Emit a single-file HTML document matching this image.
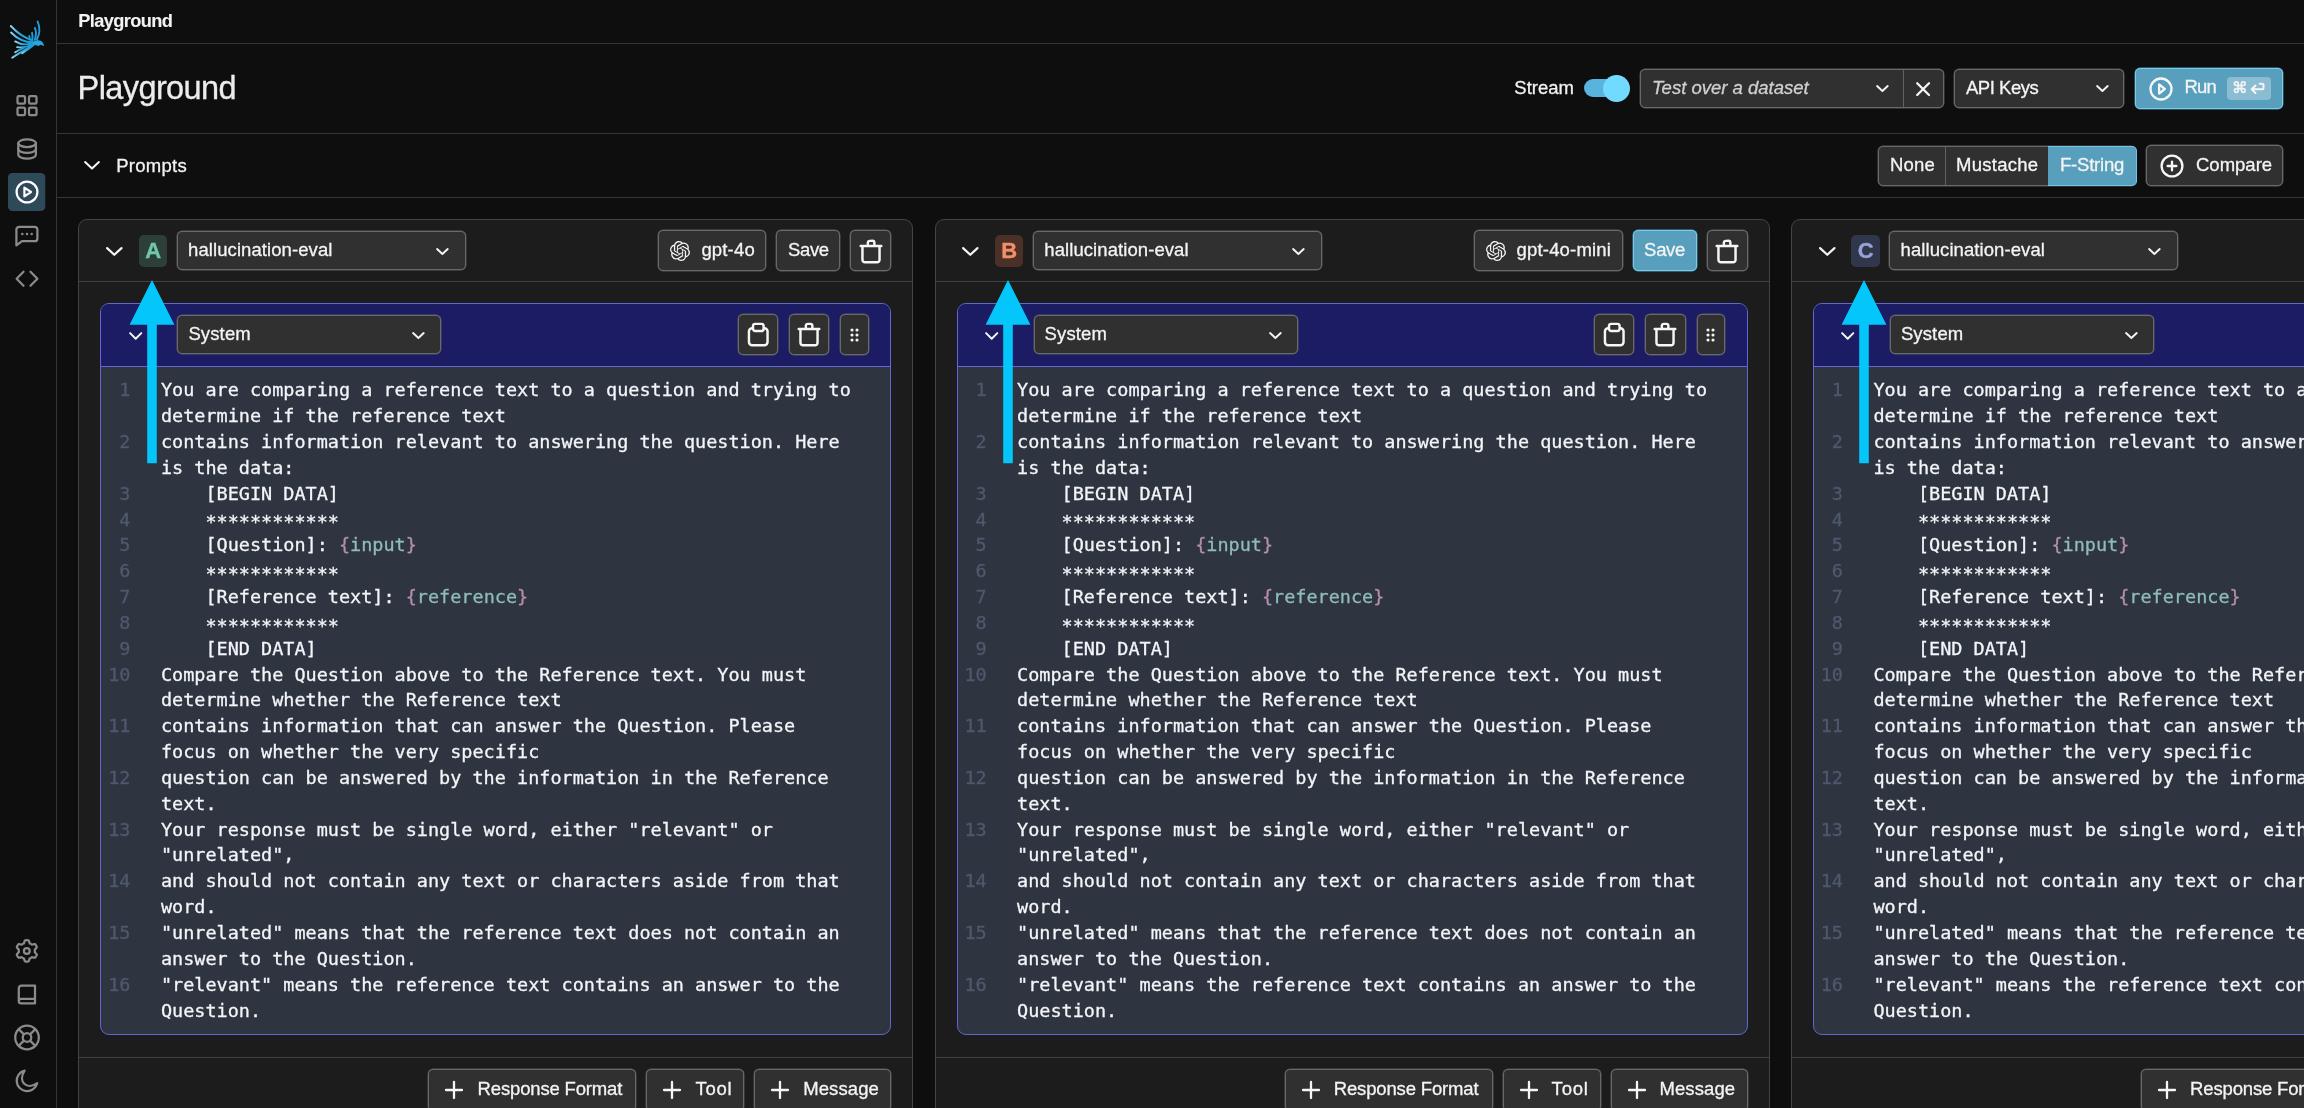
<!DOCTYPE html>
<html lang="en">
<head>
<meta charset="utf-8">
<title>Playground</title>
<style>
*{box-sizing:border-box;margin:0;padding:0}
html,body{width:2304px;height:1108px;overflow:hidden;background:#0e0e0e}
body{position:relative;-webkit-text-stroke:0.3px currentColor;font-family:"Liberation Sans",sans-serif;color:#f2f2f2;font-size:18px}
#app{position:absolute;left:0;top:0;width:2304px;height:1108px;overflow:hidden;will-change:transform}
.abs{position:absolute}
#side{position:absolute;left:0;top:0;width:57px;height:1108px;border-right:1px solid #343434;background:#0e0e0e}
#side svg{position:absolute;left:0;top:0}
.hline{position:absolute;left:57px;right:0;height:1px;background:#363636}
.crumb{-webkit-text-stroke:0.1px currentColor;position:absolute;left:78.3px;top:8.7px;font-weight:bold;font-size:18.2px;line-height:24px;color:#f2f2f2;letter-spacing:-0.6px}
.title{position:absolute;left:77.6px;top:66px;font-size:32.5px;line-height:44px;color:#ececec;letter-spacing:-0.6px}
.lbl{margin-top:-0.5px;position:absolute;font-size:18.5px;line-height:24px;color:#f2f2f2;white-space:nowrap}
.box{position:absolute;background:#303030;border:1px solid #696969;border-radius:5px;box-shadow:0 0 0 0.45px rgba(110,110,110,0.75)}
.btn{position:absolute;background:#303030;border:1px solid #696969;border-radius:5px;height:40px;box-shadow:0 0 0 0.45px rgba(110,110,110,0.75)}
.btn.pri{background:#579fbc;border-color:#74cdf0;box-shadow:0 0 0 0.45px rgba(116,205,240,0.7)}
.btn span,.box span{margin-top:-0.6px;position:absolute;white-space:nowrap;font-size:18.5px;line-height:24px;color:#f4f4f4}
.btn svg,.box svg{position:absolute}
svg{display:block;overflow:visible}
.ico{fill:none;stroke:#f6f6f6;stroke-width:2.3;stroke-linecap:round;stroke-linejoin:round}
.card{position:absolute;top:219px;width:835px;height:920px;background:#1c1c1c;border:1px solid #444444;border-radius:9px}
.card .sep{position:absolute;left:0;right:0;height:1px;background:#414141}
.badge{position:absolute;left:59.6px;top:14.6px;width:28.2px;height:32.2px;border-radius:5px;font-weight:bold;font-size:22px;line-height:31.6px;text-align:center;-webkit-text-stroke:0.35px currentColor}
.msg{position:absolute;left:21px;top:83px;width:791px;height:732px;border:1px solid #6066d2;border-radius:9px;background:#2e3440;overflow:hidden}
.msg .mh{position:absolute;left:0;top:0;right:0;height:63px;background:#1b1c63;border-bottom:1px solid #6066d2}
.ed{position:absolute;left:0;top:73.3px;right:0;font-family:"DejaVu Sans Mono","Liberation Mono",monospace;font-size:18.49px;line-height:25.85px;color:#f3f5f8}
.ed div{position:relative;height:25.85px;padding-left:59.5px;white-space:pre}
.ed i{position:absolute;left:0;width:29.1px;text-align:right;font-style:normal;color:#4f596d}
.ed b{font-weight:normal;color:#b48ead}
.ed u{text-decoration:none;color:#8fbcbb}
.ed s{text-decoration:none;position:relative;top:2.8px}
.arrow{position:absolute}
</style>
</head>
<body>
<div id="app">

<div id="side"><svg width="56" height="1108" viewBox="0 0 56 1108">
<g fill="none" stroke-linecap="round" stroke-width="1.9">
<defs><linearGradient id="lg" x1="0" y1="0" x2="1" y2="0"><stop offset="0" stop-color="#8fd6f0"/><stop offset="0.45" stop-color="#27a5dc"/><stop offset="1" stop-color="#1c9bd6"/></linearGradient></defs>
<path d="M10.8 26 Q20.8 36.7 32.4 40.4" stroke="url(#lg)"/>
<path d="M11.1 32.5 Q20.4 42.2 33 42.3" stroke="url(#lg)"/>
<path d="M15.2 41.4 Q22.8 46.2 33.4 43.2" stroke="url(#lg)"/>
<path d="M17.1 47.1 Q25.7 48.3 34.4 43.8" stroke="url(#lg)"/>
<path d="M12.2 57.7 Q20 52.6 35.2 43.9" stroke="url(#lg)"/>
<path d="M15.2 52.3 Q19.6 49.6 24.6 47.3" stroke="url(#lg)"/>
<path d="M22.2 53.3 Q27.6 50 33 45.6" stroke="url(#lg)"/>
<path d="M37.6 21.4 Q41.5 30.8 36.8 39.8" stroke="#1f9fd9"/>
<path d="M34.9 27.9 Q37.2 33 34.7 39.8" stroke="#1f9fd9"/>
<path d="M32 32.8 Q32.9 35.9 32.3 39.8" stroke="#1f9fd9"/>
<path d="M29.3 36 Q29.8 37.6 29.8 39.6" stroke="#1f9fd9"/>
<path d="M32.5 42.6 Q37.6 39.6 40.8 41.6 Q42.8 43 43.4 45.4 Q41.8 44 40.2 44.3 Q38.8 45.6 37 44.9 Q35 44.6 32.5 42.6 Z" stroke="#2aa6dc" fill="#2aa6dc" stroke-width="1.2" stroke-linejoin="round"/>
</g>
<g fill="none" stroke="#8b8b8b" stroke-width="2.25" stroke-linecap="round" stroke-linejoin="round">
<rect x="17.5" y="96.2" width="7.5" height="7.5" rx="1.2"/>
<rect x="29.0" y="96.2" width="7.5" height="7.5" rx="1.2"/>
<rect x="17.5" y="107.6" width="7.5" height="7.5" rx="1.2"/>
<rect x="29.0" y="107.6" width="7.5" height="7.5" rx="1.2"/>
<ellipse cx="27.1" cy="143.2" rx="8.8" ry="3.8"/>
<path d="M18.3 143.2 V154.8 a8.8 3.8 0 0 0 17.6 0 V143.2"/>
<path d="M18.3 149 a8.8 3.8 0 0 0 17.6 0"/>
</g>
<rect x="8" y="173" width="37.3" height="38" rx="4.5" fill="#2e4a58"/>
<g fill="none" stroke="#ffffff" stroke-width="2.2" stroke-linecap="round" stroke-linejoin="round">
<circle cx="27" cy="192" r="10.4"/>
<path d="M24.4 187.6 L31 192 L24.4 196.4 Z"/>
</g>
<g fill="none" stroke="#8b8b8b" stroke-width="2.25" stroke-linecap="round" stroke-linejoin="round">
<path d="M16.4 245.4 V229.6 a2.8 2.8 0 0 1 2.8-2.8 h15.4 a2.8 2.8 0 0 1 2.8 2.8 v8.8 a2.8 2.8 0 0 1 -2.8 2.8 H22 Z"/>
</g>
<circle cx="22.3" cy="234" r="1.25" fill="#8b8b8b"/>
<circle cx="27.0" cy="234" r="1.25" fill="#8b8b8b"/>
<circle cx="31.7" cy="234" r="1.25" fill="#8b8b8b"/>
<g fill="none" stroke="#8b8b8b" stroke-width="2.25" stroke-linecap="round" stroke-linejoin="round">
<path d="M23.5 271.8 L16.6 278.8 L23.5 285.8"/>
<path d="M30.5 271.8 L37.4 278.8 L30.5 285.8"/>
<path d="M26.80 940.20 L27.36 940.21 L27.92 940.26 L28.47 940.33 L28.91 940.96 L29.23 941.82 L29.47 942.69 L29.70 943.34 L30.09 943.50 L30.48 943.68 L30.85 943.89 L31.21 944.11 L31.56 944.35 L31.90 944.61 L32.58 944.48 L33.45 944.25 L34.35 944.10 L35.12 944.17 L35.46 944.61 L35.77 945.07 L36.07 945.55 L36.33 946.04 L36.57 946.55 L36.79 947.07 L36.47 947.76 L35.88 948.47 L35.25 949.10 L34.80 949.63 L34.86 950.05 L34.89 950.48 L34.90 950.90 L34.89 951.32 L34.86 951.75 L34.80 952.17 L35.25 952.70 L35.88 953.33 L36.47 954.04 L36.79 954.73 L36.57 955.25 L36.33 955.76 L36.07 956.25 L35.77 956.73 L35.46 957.19 L35.12 957.63 L34.35 957.70 L33.45 957.55 L32.58 957.32 L31.90 957.19 L31.56 957.45 L31.21 957.69 L30.85 957.91 L30.48 958.12 L30.09 958.30 L29.70 958.46 L29.47 959.11 L29.23 959.98 L28.91 960.84 L28.47 961.47 L27.92 961.54 L27.36 961.59 L26.80 961.60 L26.24 961.59 L25.68 961.54 L25.13 961.47 L24.69 960.84 L24.37 959.98 L24.13 959.11 L23.90 958.46 L23.51 958.30 L23.12 958.12 L22.75 957.91 L22.39 957.69 L22.04 957.45 L21.70 957.19 L21.02 957.32 L20.15 957.55 L19.25 957.70 L18.48 957.63 L18.14 957.19 L17.83 956.73 L17.53 956.25 L17.27 955.76 L17.03 955.25 L16.81 954.73 L17.13 954.04 L17.72 953.33 L18.35 952.70 L18.80 952.17 L18.74 951.75 L18.71 951.32 L18.70 950.90 L18.71 950.48 L18.74 950.05 L18.80 949.63 L18.35 949.10 L17.72 948.47 L17.13 947.76 L16.81 947.07 L17.03 946.55 L17.27 946.04 L17.53 945.55 L17.83 945.07 L18.14 944.61 L18.48 944.17 L19.25 944.10 L20.15 944.25 L21.02 944.48 L21.70 944.61 L22.04 944.35 L22.39 944.11 L22.75 943.89 L23.12 943.68 L23.51 943.50 L23.90 943.34 L24.13 942.69 L24.37 941.82 L24.69 940.96 L25.13 940.33 L25.68 940.26 L26.24 940.21 Z"/>
<circle cx="26.8" cy="950.9" r="2.9"/>
<path d="M35 985.6 H21.4 a2.6 2.6 0 0 0 -2.6 2.6 V1001 a2.4 2.4 0 0 0 2.4 2.4 H35 Z M18.8 1001.2 a2.4 2.4 0 0 1 2.4-2.4 H35"/>
<circle cx="27" cy="1037.5" r="11.8"/>
<circle cx="27" cy="1037.5" r="4.3"/>
<path d="M30.10 1040.60 L35.20 1045.70"/>
<path d="M30.10 1034.40 L35.20 1029.30"/>
<path d="M23.90 1040.60 L18.80 1045.70"/>
<path d="M23.90 1034.40 L18.80 1029.30"/>
<path d="M37.2 1083.2 A10.4 10.4 0 1 1 24.6 1070.6 C17.5 1081.5 26.5 1090.5 37.2 1083.2 Z"/>
</g>
</svg></div>
<div class="hline" style="top:43px"></div>
<div class="hline" style="top:133px"></div>
<div class="hline" style="top:197px"></div>
<div class="crumb">Playground</div>
<div class="title">Playground</div>
<div class="lbl" style="left:1514.3px;top:76px;letter-spacing:0px">Stream</div>
<div class="abs" style="left:1584px;top:79px;width:44px;height:18px;border-radius:9px;background:#58b4dc"></div>
<div class="abs" style="left:1602.5px;top:74.5px;width:27px;height:27px;border-radius:50%;background:#72d9ff"></div>
<div class="box" style="left:1640px;top:68.6px;width:304px;height:39.4px"><span style="left:11px;top:6.6px;font-style:italic;color:#d0d0d0;letter-spacing:0px">Test over a dataset</span><svg class="abs" style="left:235.0px;top:15.4px" width="12.8" height="7.0" viewBox="0 0 12.8 7.0"><path d="M1.1 1.1 L6.40 5.90 L11.70 1.1" fill="none" stroke="#f4f4f4" stroke-width="2.0" stroke-linecap="round" stroke-linejoin="round"/></svg><div class="abs" style="left:262px;top:0;width:1px;height:37.4px;background:#626262"></div><svg class="ico" style="left:275.4px;top:12px" width="14.2" height="14.2" viewBox="0 0 14.2 14.2"><path d="M1.2 1.2 L13 13 M13 1.2 L1.2 13"/></svg></div>
<div class="box" style="left:1954px;top:69px;width:170px;height:39px"><span style="left:11px;top:6.6px;letter-spacing:-0.47px">API Keys</span><svg class="abs" style="left:141.0px;top:15.4px" width="12.8" height="7.0" viewBox="0 0 12.8 7.0"><path d="M1.1 1.1 L6.40 5.90 L11.70 1.1" fill="none" stroke="#f4f4f4" stroke-width="2.0" stroke-linecap="round" stroke-linejoin="round"/></svg></div>
<div class="btn pri" style="left:2135px;top:68px;width:148px;height:40.5px"><svg class="ico" style="left:12.5px;top:7.5px" width="24" height="24" viewBox="0 0 24 24"><circle cx="12" cy="12" r="10.5"/><path d="M10.1 7.4 L15.8 12 L10.1 16.6 Z"/></svg><span style="left:48.6px;top:7px;letter-spacing:-0.85px">Run</span><div class="abs" style="left:91px;top:8px;width:44px;height:23px;border-radius:4px;background:#8abdd2"></div><span style="left:96px;top:7.6px;font-size:15.5px;-webkit-text-stroke:0.5px currentColor;font-family:'DejaVu Sans',sans-serif">&#8984;</span><svg class="ico" style="left:113px;top:13px;stroke-width:2" width="17" height="13" viewBox="0 0 17 13"><path d="M10.7 1.8 H13 a1.5 1.5 0 0 1 1.5 1.5 V5.8 a1.5 1.5 0 0 1 -1.5 1.5 H2.7 M6.5 3.5 L2.7 7.3 L6.5 11.1"/></svg></div>
<svg class="abs" style="left:83.8px;top:161.2px" width="16.0" height="8.6" viewBox="0 0 16.0 8.6"><path d="M1.1 1.1 L8.00 7.50 L14.90 1.1" fill="none" stroke="#f4f4f4" stroke-width="2.1" stroke-linecap="round" stroke-linejoin="round"/></svg>
<div class="lbl" style="left:116.2px;top:154.2px;letter-spacing:0.28px">Prompts</div>
<div class="box" style="left:1878px;top:146px;width:258px;height:40px"><div class="abs" style="left:169px;top:-1px;width:88.5px;height:40px;background:#579fbc;border:1px solid #70c6e8;border-left:none;border-radius:0 5px 5px 0"></div><div class="abs" style="left:66px;top:0;width:1px;height:38px;background:#626262"></div><span style="left:11px;top:7px;letter-spacing:0.2px">None</span><span style="left:77px;top:7px;letter-spacing:0.27px">Mustache</span><span style="left:181px;top:7px;letter-spacing:-0.21px">F-String</span></div>
<div class="btn" style="left:2146px;top:145px;width:137px;height:41px"><svg class="ico" style="left:13px;top:8px" width="24" height="24" viewBox="0 0 24 24"><circle cx="12" cy="12" r="10.4"/><path d="M12 7.6 V16.4 M7.6 12 H16.4"/></svg><span style="left:49px;top:7.5px">Compare</span></div>
<div class="card" style="left:78.4px">
<svg class="abs" style="left:26.8px;top:27.2px" width="16.6" height="8.9" viewBox="0 0 16.6 8.9"><path d="M1.1 1.1 L8.30 7.80 L15.50 1.1" fill="none" stroke="#f4f4f4" stroke-width="2.2" stroke-linecap="round" stroke-linejoin="round"/></svg>
<div class="badge" style="background:#2c4039;color:#6fc9a9">A</div>
<div class="box" style="left:97.5px;top:11.4px;width:289px;height:39px"><span style="left:10.2px;top:6.6px;letter-spacing:0.08px">hallucination-eval</span><svg class="abs" style="left:257.7px;top:15.6px" width="12.8" height="7.0" viewBox="0 0 12.8 7.0"><path d="M1.1 1.1 L6.40 5.90 L11.70 1.1" fill="none" stroke="#f4f4f4" stroke-width="2.0" stroke-linecap="round" stroke-linejoin="round"/></svg></div>
<div class="btn" style="left:579px;top:10.4px;width:108px;height:41px"><svg class="abs" style="left:11px;top:9.5px" width="20" height="20" viewBox="0 0 24 24"><path fill="#f4f4f4" d="M22.2819 9.8211a5.9847 5.9847 0 0 0-.5157-4.9108 6.0462 6.0462 0 0 0-6.5098-2.9A6.0651 6.0651 0 0 0 4.9807 4.1818a5.9847 5.9847 0 0 0-3.9977 2.9 6.0462 6.0462 0 0 0 .7427 7.0966 5.98 5.98 0 0 0 .511 4.9107 6.051 6.051 0 0 0 6.5146 2.9001A5.9847 5.9847 0 0 0 13.2599 24a6.0557 6.0557 0 0 0 5.7718-4.2058 5.9894 5.9894 0 0 0 3.9977-2.9001 6.0557 6.0557 0 0 0-.7475-7.0729zm-9.022 12.6081a4.4755 4.4755 0 0 1-2.8764-1.0408l.1419-.0804 4.7783-2.7582a.7948.7948 0 0 0 .3927-.6813v-6.7369l2.02 1.1686a.071.071 0 0 1 .038.052v5.5826a4.504 4.504 0 0 1-4.4945 4.4944zm-9.6607-4.1254a4.4708 4.4708 0 0 1-.5346-3.0137l.142.0852 4.783 2.7582a.7712.7712 0 0 0 .7806 0l5.8428-3.3685v2.3324a.0804.0804 0 0 1-.0332.0615L9.74 19.9502a4.4992 4.4992 0 0 1-6.1408-1.6464zM2.3408 7.8956a4.485 4.485 0 0 1 2.3655-1.9728V11.6a.7664.7664 0 0 0 .3879.6765l5.8144 3.3543-2.0201 1.1685a.0757.0757 0 0 1-.071 0l-4.8303-2.7865A4.504 4.504 0 0 1 2.3408 7.872zm16.5963 3.8558L13.1038 8.364 15.1192 7.2a.0757.0757 0 0 1 .071 0l4.8303 2.7913a4.4944 4.4944 0 0 1-.6765 8.1042v-5.6772a.79.79 0 0 0-.407-.667zm2.0107-3.0231l-.142-.0852-4.7735-2.7818a.7759.7759 0 0 0-.7854 0L9.409 9.2297V6.8974a.0662.0662 0 0 1 .0284-.0615l4.8303-2.7866a4.4992 4.4992 0 0 1 6.6802 4.66zM8.3065 12.863l-2.02-1.1638a.0804.0804 0 0 1-.038-.0567V6.0742a4.4992 4.4992 0 0 1 7.3757-3.4537l-.142.0805L8.704 5.459a.7948.7948 0 0 0-.3927.6813zm1.0976-2.3654l2.602-1.4998 2.6069 1.4998v2.9994l-2.5974 1.4997-2.6067-1.4997Z"/></svg><span style="left:42px;top:7.4px;letter-spacing:0.17px">gpt-4o</span></div>
<div class="btn" style="left:697px;top:10.4px;width:64px;height:41px"><span style="left:10.5px;top:7px;letter-spacing:-0.3px">Save</span></div>
<div class="btn" style="left:771px;top:10.4px;width:41px;height:41px"><svg class="ico" style="left:7.5px;top:7.5px;stroke-width:2.45" width="24" height="24" viewBox="0 0 24 24"><path d="M1.7 6.9 H22.3 M8.85 6.9 V3.85 a2 2 0 0 1 2-2 h2.5 a2 2 0 0 1 2 2 V6.9 M3.45 6.9 V20.75 a2.5 2.5 0 0 0 2.5 2.5 h12.1 a2.5 2.5 0 0 0 2.5-2.5 V6.9"/></svg></div>
<div class="sep" style="top:61px"></div>
<div class="msg">
<div class="mh">
<svg class="abs" style="left:27.4px;top:27.6px" width="13.4" height="7.8" viewBox="0 0 13.4 7.8"><path d="M1.1 1.1 L6.70 6.70 L12.30 1.1" fill="none" stroke="#f4f4f4" stroke-width="2.0" stroke-linecap="round" stroke-linejoin="round"/></svg>
<div class="box" style="left:76px;top:11.4px;width:264px;height:39px"><span style="left:10px;top:6.6px;letter-spacing:0.13px">System</span><svg class="abs" style="left:234.0px;top:15.4px" width="12.8" height="7.0" viewBox="0 0 12.8 7.0"><path d="M1.1 1.1 L6.40 5.90 L11.70 1.1" fill="none" stroke="#f4f4f4" stroke-width="2.0" stroke-linecap="round" stroke-linejoin="round"/></svg></div>
<div class="btn" style="left:636.4px;top:10.3px;width:40px;height:41px"><svg class="ico" style="left:7px;top:7px;stroke-width:2.45" width="24" height="24" viewBox="0 0 24 24"><rect x="2.95" y="6.15" width="18.6" height="17.1" rx="3.2"/><rect x="7.0" y="1.85" width="10.6" height="7.2" rx="2.2" fill="#303030"/></svg></div>
<div class="btn" style="left:687.5px;top:10.3px;width:40.5px;height:41px"><svg class="ico" style="left:7.2px;top:7px;stroke-width:2.45" width="24" height="24" viewBox="0 0 24 24"><path d="M1.7 6.9 H22.3 M8.85 6.9 V3.85 a2 2 0 0 1 2-2 h2.5 a2 2 0 0 1 2 2 V6.9 M3.45 6.9 V20.75 a2.5 2.5 0 0 0 2.5 2.5 h12.1 a2.5 2.5 0 0 0 2.5-2.5 V6.9"/></svg></div>
<div class="btn" style="left:739px;top:10.3px;width:28.5px;height:41px"><svg class="abs" style="left:8.7px;top:12.4px" width="9" height="14" viewBox="0 0 9 14"><circle cx="2" cy="2" r="1.55" fill="#f4f4f4"/><circle cx="2" cy="7" r="1.55" fill="#f4f4f4"/><circle cx="2" cy="12" r="1.55" fill="#f4f4f4"/><circle cx="7" cy="2" r="1.55" fill="#f4f4f4"/><circle cx="7" cy="7" r="1.55" fill="#f4f4f4"/><circle cx="7" cy="12" r="1.55" fill="#f4f4f4"/></svg></div>
</div>
<div class="ed">
<div><i>1</i>You are comparing a reference text to a question and trying to</div>
<div><i></i>determine if the reference text</div>
<div><i>2</i>contains information relevant to answering the question. Here</div>
<div><i></i>is the data:</div>
<div><i>3</i>    [BEGIN DATA]</div>
<div><i>4</i>    <s>************</s></div>
<div><i>5</i>    [Question]: <b>{</b><u>input</u><b>}</b></div>
<div><i>6</i>    <s>************</s></div>
<div><i>7</i>    [Reference text]: <b>{</b><u>reference</u><b>}</b></div>
<div><i>8</i>    <s>************</s></div>
<div><i>9</i>    [END DATA]</div>
<div><i>10</i>Compare the Question above to the Reference text. You must</div>
<div><i></i>determine whether the Reference text</div>
<div><i>11</i>contains information that can answer the Question. Please</div>
<div><i></i>focus on whether the very specific</div>
<div><i>12</i>question can be answered by the information in the Reference</div>
<div><i></i>text.</div>
<div><i>13</i>Your response must be single word, either &quot;relevant&quot; or</div>
<div><i></i>&quot;unrelated&quot;,</div>
<div><i>14</i>and should not contain any text or characters aside from that</div>
<div><i></i>word.</div>
<div><i>15</i>&quot;unrelated&quot; means that the reference text does not contain an</div>
<div><i></i>answer to the Question.</div>
<div><i>16</i>&quot;relevant&quot; means the reference text contains an answer to the</div>
<div><i></i>Question.</div>
</div>
</div>
<div class="sep" style="top:837px"></div>
<div class="btn" style="left:349px;top:849px;width:208px;height:42px"><svg class="ico" style="left:16px;top:11px" width="18" height="18" viewBox="0 0 18 18"><path d="M9 1 V17 M1 9 H17"/></svg><span style="left:48.2px;top:7.5px;letter-spacing:-0.16px">Response Format</span></div>
<div class="btn" style="left:567px;top:849px;width:98px;height:42px"><svg class="ico" style="left:16px;top:11px" width="18" height="18" viewBox="0 0 18 18"><path d="M9 1 V17 M1 9 H17"/></svg><span style="left:48px;top:7.5px;letter-spacing:0.8px">Tool</span></div>
<div class="btn" style="left:675px;top:849px;width:137px;height:42px"><svg class="ico" style="left:16px;top:11px" width="18" height="18" viewBox="0 0 18 18"><path d="M9 1 V17 M1 9 H17"/></svg><span style="left:47.8px;top:7.5px;letter-spacing:0.11px">Message</span></div>
<svg class="arrow" style="left:49.4px;top:60px" width="46" height="184" viewBox="0 0 46 184"><path d="M23 0 L45.4 44.8 H27.8 V183.2 H18.2 V44.8 H0.6 Z" fill="#04c6fa"/></svg>
</div>
<div class="card" style="left:934.6px">
<svg class="abs" style="left:26.8px;top:27.2px" width="16.6" height="8.9" viewBox="0 0 16.6 8.9"><path d="M1.1 1.1 L8.30 7.80 L15.50 1.1" fill="none" stroke="#f4f4f4" stroke-width="2.2" stroke-linecap="round" stroke-linejoin="round"/></svg>
<div class="badge" style="background:#4a3027;color:#f38f68">B</div>
<div class="box" style="left:97.5px;top:11.4px;width:289px;height:39px"><span style="left:10.2px;top:6.6px;letter-spacing:0.08px">hallucination-eval</span><svg class="abs" style="left:257.7px;top:15.6px" width="12.8" height="7.0" viewBox="0 0 12.8 7.0"><path d="M1.1 1.1 L6.40 5.90 L11.70 1.1" fill="none" stroke="#f4f4f4" stroke-width="2.0" stroke-linecap="round" stroke-linejoin="round"/></svg></div>
<div class="btn" style="left:538px;top:10.4px;width:149px;height:41px"><svg class="abs" style="left:11px;top:9.5px" width="20" height="20" viewBox="0 0 24 24"><path fill="#f4f4f4" d="M22.2819 9.8211a5.9847 5.9847 0 0 0-.5157-4.9108 6.0462 6.0462 0 0 0-6.5098-2.9A6.0651 6.0651 0 0 0 4.9807 4.1818a5.9847 5.9847 0 0 0-3.9977 2.9 6.0462 6.0462 0 0 0 .7427 7.0966 5.98 5.98 0 0 0 .511 4.9107 6.051 6.051 0 0 0 6.5146 2.9001A5.9847 5.9847 0 0 0 13.2599 24a6.0557 6.0557 0 0 0 5.7718-4.2058 5.9894 5.9894 0 0 0 3.9977-2.9001 6.0557 6.0557 0 0 0-.7475-7.0729zm-9.022 12.6081a4.4755 4.4755 0 0 1-2.8764-1.0408l.1419-.0804 4.7783-2.7582a.7948.7948 0 0 0 .3927-.6813v-6.7369l2.02 1.1686a.071.071 0 0 1 .038.052v5.5826a4.504 4.504 0 0 1-4.4945 4.4944zm-9.6607-4.1254a4.4708 4.4708 0 0 1-.5346-3.0137l.142.0852 4.783 2.7582a.7712.7712 0 0 0 .7806 0l5.8428-3.3685v2.3324a.0804.0804 0 0 1-.0332.0615L9.74 19.9502a4.4992 4.4992 0 0 1-6.1408-1.6464zM2.3408 7.8956a4.485 4.485 0 0 1 2.3655-1.9728V11.6a.7664.7664 0 0 0 .3879.6765l5.8144 3.3543-2.0201 1.1685a.0757.0757 0 0 1-.071 0l-4.8303-2.7865A4.504 4.504 0 0 1 2.3408 7.872zm16.5963 3.8558L13.1038 8.364 15.1192 7.2a.0757.0757 0 0 1 .071 0l4.8303 2.7913a4.4944 4.4944 0 0 1-.6765 8.1042v-5.6772a.79.79 0 0 0-.407-.667zm2.0107-3.0231l-.142-.0852-4.7735-2.7818a.7759.7759 0 0 0-.7854 0L9.409 9.2297V6.8974a.0662.0662 0 0 1 .0284-.0615l4.8303-2.7866a4.4992 4.4992 0 0 1 6.6802 4.66zM8.3065 12.863l-2.02-1.1638a.0804.0804 0 0 1-.038-.0567V6.0742a4.4992 4.4992 0 0 1 7.3757-3.4537l-.142.0805L8.704 5.459a.7948.7948 0 0 0-.3927.6813zm1.0976-2.3654l2.602-1.4998 2.6069 1.4998v2.9994l-2.5974 1.4997-2.6067-1.4997Z"/></svg><span style="left:42px;top:7.4px;letter-spacing:0.17px">gpt-4o-mini</span></div>
<div class="btn pri" style="left:697px;top:10.4px;width:64px;height:41px"><span style="left:10.5px;top:7px;letter-spacing:-0.3px">Save</span></div>
<div class="btn" style="left:771px;top:10.4px;width:41px;height:41px"><svg class="ico" style="left:7.5px;top:7.5px;stroke-width:2.45" width="24" height="24" viewBox="0 0 24 24"><path d="M1.7 6.9 H22.3 M8.85 6.9 V3.85 a2 2 0 0 1 2-2 h2.5 a2 2 0 0 1 2 2 V6.9 M3.45 6.9 V20.75 a2.5 2.5 0 0 0 2.5 2.5 h12.1 a2.5 2.5 0 0 0 2.5-2.5 V6.9"/></svg></div>
<div class="sep" style="top:61px"></div>
<div class="msg">
<div class="mh">
<svg class="abs" style="left:27.4px;top:27.6px" width="13.4" height="7.8" viewBox="0 0 13.4 7.8"><path d="M1.1 1.1 L6.70 6.70 L12.30 1.1" fill="none" stroke="#f4f4f4" stroke-width="2.0" stroke-linecap="round" stroke-linejoin="round"/></svg>
<div class="box" style="left:76px;top:11.4px;width:264px;height:39px"><span style="left:10px;top:6.6px;letter-spacing:0.13px">System</span><svg class="abs" style="left:234.0px;top:15.4px" width="12.8" height="7.0" viewBox="0 0 12.8 7.0"><path d="M1.1 1.1 L6.40 5.90 L11.70 1.1" fill="none" stroke="#f4f4f4" stroke-width="2.0" stroke-linecap="round" stroke-linejoin="round"/></svg></div>
<div class="btn" style="left:636.4px;top:10.3px;width:40px;height:41px"><svg class="ico" style="left:7px;top:7px;stroke-width:2.45" width="24" height="24" viewBox="0 0 24 24"><rect x="2.95" y="6.15" width="18.6" height="17.1" rx="3.2"/><rect x="7.0" y="1.85" width="10.6" height="7.2" rx="2.2" fill="#303030"/></svg></div>
<div class="btn" style="left:687.5px;top:10.3px;width:40.5px;height:41px"><svg class="ico" style="left:7.2px;top:7px;stroke-width:2.45" width="24" height="24" viewBox="0 0 24 24"><path d="M1.7 6.9 H22.3 M8.85 6.9 V3.85 a2 2 0 0 1 2-2 h2.5 a2 2 0 0 1 2 2 V6.9 M3.45 6.9 V20.75 a2.5 2.5 0 0 0 2.5 2.5 h12.1 a2.5 2.5 0 0 0 2.5-2.5 V6.9"/></svg></div>
<div class="btn" style="left:739px;top:10.3px;width:28.5px;height:41px"><svg class="abs" style="left:8.7px;top:12.4px" width="9" height="14" viewBox="0 0 9 14"><circle cx="2" cy="2" r="1.55" fill="#f4f4f4"/><circle cx="2" cy="7" r="1.55" fill="#f4f4f4"/><circle cx="2" cy="12" r="1.55" fill="#f4f4f4"/><circle cx="7" cy="2" r="1.55" fill="#f4f4f4"/><circle cx="7" cy="7" r="1.55" fill="#f4f4f4"/><circle cx="7" cy="12" r="1.55" fill="#f4f4f4"/></svg></div>
</div>
<div class="ed">
<div><i>1</i>You are comparing a reference text to a question and trying to</div>
<div><i></i>determine if the reference text</div>
<div><i>2</i>contains information relevant to answering the question. Here</div>
<div><i></i>is the data:</div>
<div><i>3</i>    [BEGIN DATA]</div>
<div><i>4</i>    <s>************</s></div>
<div><i>5</i>    [Question]: <b>{</b><u>input</u><b>}</b></div>
<div><i>6</i>    <s>************</s></div>
<div><i>7</i>    [Reference text]: <b>{</b><u>reference</u><b>}</b></div>
<div><i>8</i>    <s>************</s></div>
<div><i>9</i>    [END DATA]</div>
<div><i>10</i>Compare the Question above to the Reference text. You must</div>
<div><i></i>determine whether the Reference text</div>
<div><i>11</i>contains information that can answer the Question. Please</div>
<div><i></i>focus on whether the very specific</div>
<div><i>12</i>question can be answered by the information in the Reference</div>
<div><i></i>text.</div>
<div><i>13</i>Your response must be single word, either &quot;relevant&quot; or</div>
<div><i></i>&quot;unrelated&quot;,</div>
<div><i>14</i>and should not contain any text or characters aside from that</div>
<div><i></i>word.</div>
<div><i>15</i>&quot;unrelated&quot; means that the reference text does not contain an</div>
<div><i></i>answer to the Question.</div>
<div><i>16</i>&quot;relevant&quot; means the reference text contains an answer to the</div>
<div><i></i>Question.</div>
</div>
</div>
<div class="sep" style="top:837px"></div>
<div class="btn" style="left:349px;top:849px;width:208px;height:42px"><svg class="ico" style="left:16px;top:11px" width="18" height="18" viewBox="0 0 18 18"><path d="M9 1 V17 M1 9 H17"/></svg><span style="left:48.2px;top:7.5px;letter-spacing:-0.16px">Response Format</span></div>
<div class="btn" style="left:567px;top:849px;width:98px;height:42px"><svg class="ico" style="left:16px;top:11px" width="18" height="18" viewBox="0 0 18 18"><path d="M9 1 V17 M1 9 H17"/></svg><span style="left:48px;top:7.5px;letter-spacing:0.8px">Tool</span></div>
<div class="btn" style="left:675px;top:849px;width:137px;height:42px"><svg class="ico" style="left:16px;top:11px" width="18" height="18" viewBox="0 0 18 18"><path d="M9 1 V17 M1 9 H17"/></svg><span style="left:47.8px;top:7.5px;letter-spacing:0.11px">Message</span></div>
<svg class="arrow" style="left:49.4px;top:60px" width="46" height="184" viewBox="0 0 46 184"><path d="M23 0 L45.4 44.8 H27.8 V183.2 H18.2 V44.8 H0.6 Z" fill="#04c6fa"/></svg>
</div>
<div class="card" style="left:1790.9px">
<svg class="abs" style="left:26.8px;top:27.2px" width="16.6" height="8.9" viewBox="0 0 16.6 8.9"><path d="M1.1 1.1 L8.30 7.80 L15.50 1.1" fill="none" stroke="#f4f4f4" stroke-width="2.2" stroke-linecap="round" stroke-linejoin="round"/></svg>
<div class="badge" style="background:#30364b;color:#95a3d6">C</div>
<div class="box" style="left:97.5px;top:11.4px;width:289px;height:39px"><span style="left:10.2px;top:6.6px;letter-spacing:0.08px">hallucination-eval</span><svg class="abs" style="left:257.7px;top:15.6px" width="12.8" height="7.0" viewBox="0 0 12.8 7.0"><path d="M1.1 1.1 L6.40 5.90 L11.70 1.1" fill="none" stroke="#f4f4f4" stroke-width="2.0" stroke-linecap="round" stroke-linejoin="round"/></svg></div>
<div class="btn" style="left:579px;top:10.4px;width:108px;height:41px"><svg class="abs" style="left:11px;top:9.5px" width="20" height="20" viewBox="0 0 24 24"><path fill="#f4f4f4" d="M22.2819 9.8211a5.9847 5.9847 0 0 0-.5157-4.9108 6.0462 6.0462 0 0 0-6.5098-2.9A6.0651 6.0651 0 0 0 4.9807 4.1818a5.9847 5.9847 0 0 0-3.9977 2.9 6.0462 6.0462 0 0 0 .7427 7.0966 5.98 5.98 0 0 0 .511 4.9107 6.051 6.051 0 0 0 6.5146 2.9001A5.9847 5.9847 0 0 0 13.2599 24a6.0557 6.0557 0 0 0 5.7718-4.2058 5.9894 5.9894 0 0 0 3.9977-2.9001 6.0557 6.0557 0 0 0-.7475-7.0729zm-9.022 12.6081a4.4755 4.4755 0 0 1-2.8764-1.0408l.1419-.0804 4.7783-2.7582a.7948.7948 0 0 0 .3927-.6813v-6.7369l2.02 1.1686a.071.071 0 0 1 .038.052v5.5826a4.504 4.504 0 0 1-4.4945 4.4944zm-9.6607-4.1254a4.4708 4.4708 0 0 1-.5346-3.0137l.142.0852 4.783 2.7582a.7712.7712 0 0 0 .7806 0l5.8428-3.3685v2.3324a.0804.0804 0 0 1-.0332.0615L9.74 19.9502a4.4992 4.4992 0 0 1-6.1408-1.6464zM2.3408 7.8956a4.485 4.485 0 0 1 2.3655-1.9728V11.6a.7664.7664 0 0 0 .3879.6765l5.8144 3.3543-2.0201 1.1685a.0757.0757 0 0 1-.071 0l-4.8303-2.7865A4.504 4.504 0 0 1 2.3408 7.872zm16.5963 3.8558L13.1038 8.364 15.1192 7.2a.0757.0757 0 0 1 .071 0l4.8303 2.7913a4.4944 4.4944 0 0 1-.6765 8.1042v-5.6772a.79.79 0 0 0-.407-.667zm2.0107-3.0231l-.142-.0852-4.7735-2.7818a.7759.7759 0 0 0-.7854 0L9.409 9.2297V6.8974a.0662.0662 0 0 1 .0284-.0615l4.8303-2.7866a4.4992 4.4992 0 0 1 6.6802 4.66zM8.3065 12.863l-2.02-1.1638a.0804.0804 0 0 1-.038-.0567V6.0742a4.4992 4.4992 0 0 1 7.3757-3.4537l-.142.0805L8.704 5.459a.7948.7948 0 0 0-.3927.6813zm1.0976-2.3654l2.602-1.4998 2.6069 1.4998v2.9994l-2.5974 1.4997-2.6067-1.4997Z"/></svg><span style="left:42px;top:7.4px;letter-spacing:0.17px">gpt-4o</span></div>
<div class="btn" style="left:697px;top:10.4px;width:64px;height:41px"><span style="left:10.5px;top:7px;letter-spacing:-0.3px">Save</span></div>
<div class="btn" style="left:771px;top:10.4px;width:41px;height:41px"><svg class="ico" style="left:7.5px;top:7.5px;stroke-width:2.45" width="24" height="24" viewBox="0 0 24 24"><path d="M1.7 6.9 H22.3 M8.85 6.9 V3.85 a2 2 0 0 1 2-2 h2.5 a2 2 0 0 1 2 2 V6.9 M3.45 6.9 V20.75 a2.5 2.5 0 0 0 2.5 2.5 h12.1 a2.5 2.5 0 0 0 2.5-2.5 V6.9"/></svg></div>
<div class="sep" style="top:61px"></div>
<div class="msg">
<div class="mh">
<svg class="abs" style="left:27.4px;top:27.6px" width="13.4" height="7.8" viewBox="0 0 13.4 7.8"><path d="M1.1 1.1 L6.70 6.70 L12.30 1.1" fill="none" stroke="#f4f4f4" stroke-width="2.0" stroke-linecap="round" stroke-linejoin="round"/></svg>
<div class="box" style="left:76px;top:11.4px;width:264px;height:39px"><span style="left:10px;top:6.6px;letter-spacing:0.13px">System</span><svg class="abs" style="left:234.0px;top:15.4px" width="12.8" height="7.0" viewBox="0 0 12.8 7.0"><path d="M1.1 1.1 L6.40 5.90 L11.70 1.1" fill="none" stroke="#f4f4f4" stroke-width="2.0" stroke-linecap="round" stroke-linejoin="round"/></svg></div>
<div class="btn" style="left:636.4px;top:10.3px;width:40px;height:41px"><svg class="ico" style="left:7px;top:7px;stroke-width:2.45" width="24" height="24" viewBox="0 0 24 24"><rect x="2.95" y="6.15" width="18.6" height="17.1" rx="3.2"/><rect x="7.0" y="1.85" width="10.6" height="7.2" rx="2.2" fill="#303030"/></svg></div>
<div class="btn" style="left:687.5px;top:10.3px;width:40.5px;height:41px"><svg class="ico" style="left:7.2px;top:7px;stroke-width:2.45" width="24" height="24" viewBox="0 0 24 24"><path d="M1.7 6.9 H22.3 M8.85 6.9 V3.85 a2 2 0 0 1 2-2 h2.5 a2 2 0 0 1 2 2 V6.9 M3.45 6.9 V20.75 a2.5 2.5 0 0 0 2.5 2.5 h12.1 a2.5 2.5 0 0 0 2.5-2.5 V6.9"/></svg></div>
<div class="btn" style="left:739px;top:10.3px;width:28.5px;height:41px"><svg class="abs" style="left:8.7px;top:12.4px" width="9" height="14" viewBox="0 0 9 14"><circle cx="2" cy="2" r="1.55" fill="#f4f4f4"/><circle cx="2" cy="7" r="1.55" fill="#f4f4f4"/><circle cx="2" cy="12" r="1.55" fill="#f4f4f4"/><circle cx="7" cy="2" r="1.55" fill="#f4f4f4"/><circle cx="7" cy="7" r="1.55" fill="#f4f4f4"/><circle cx="7" cy="12" r="1.55" fill="#f4f4f4"/></svg></div>
</div>
<div class="ed">
<div><i>1</i>You are comparing a reference text to a question and trying to</div>
<div><i></i>determine if the reference text</div>
<div><i>2</i>contains information relevant to answering the question. Here</div>
<div><i></i>is the data:</div>
<div><i>3</i>    [BEGIN DATA]</div>
<div><i>4</i>    <s>************</s></div>
<div><i>5</i>    [Question]: <b>{</b><u>input</u><b>}</b></div>
<div><i>6</i>    <s>************</s></div>
<div><i>7</i>    [Reference text]: <b>{</b><u>reference</u><b>}</b></div>
<div><i>8</i>    <s>************</s></div>
<div><i>9</i>    [END DATA]</div>
<div><i>10</i>Compare the Question above to the Reference text. You must</div>
<div><i></i>determine whether the Reference text</div>
<div><i>11</i>contains information that can answer the Question. Please</div>
<div><i></i>focus on whether the very specific</div>
<div><i>12</i>question can be answered by the information in the Reference</div>
<div><i></i>text.</div>
<div><i>13</i>Your response must be single word, either &quot;relevant&quot; or</div>
<div><i></i>&quot;unrelated&quot;,</div>
<div><i>14</i>and should not contain any text or characters aside from that</div>
<div><i></i>word.</div>
<div><i>15</i>&quot;unrelated&quot; means that the reference text does not contain an</div>
<div><i></i>answer to the Question.</div>
<div><i>16</i>&quot;relevant&quot; means the reference text contains an answer to the</div>
<div><i></i>Question.</div>
</div>
</div>
<div class="sep" style="top:837px"></div>
<div class="btn" style="left:349px;top:849px;width:208px;height:42px"><svg class="ico" style="left:16px;top:11px" width="18" height="18" viewBox="0 0 18 18"><path d="M9 1 V17 M1 9 H17"/></svg><span style="left:48.2px;top:7.5px;letter-spacing:-0.16px">Response Format</span></div>
<div class="btn" style="left:567px;top:849px;width:98px;height:42px"><svg class="ico" style="left:16px;top:11px" width="18" height="18" viewBox="0 0 18 18"><path d="M9 1 V17 M1 9 H17"/></svg><span style="left:48px;top:7.5px;letter-spacing:0.8px">Tool</span></div>
<div class="btn" style="left:675px;top:849px;width:137px;height:42px"><svg class="ico" style="left:16px;top:11px" width="18" height="18" viewBox="0 0 18 18"><path d="M9 1 V17 M1 9 H17"/></svg><span style="left:47.8px;top:7.5px;letter-spacing:0.11px">Message</span></div>
<svg class="arrow" style="left:49.4px;top:60px" width="46" height="184" viewBox="0 0 46 184"><path d="M23 0 L45.4 44.8 H27.8 V183.2 H18.2 V44.8 H0.6 Z" fill="#04c6fa"/></svg>
</div>
</div>
</body>
</html>
